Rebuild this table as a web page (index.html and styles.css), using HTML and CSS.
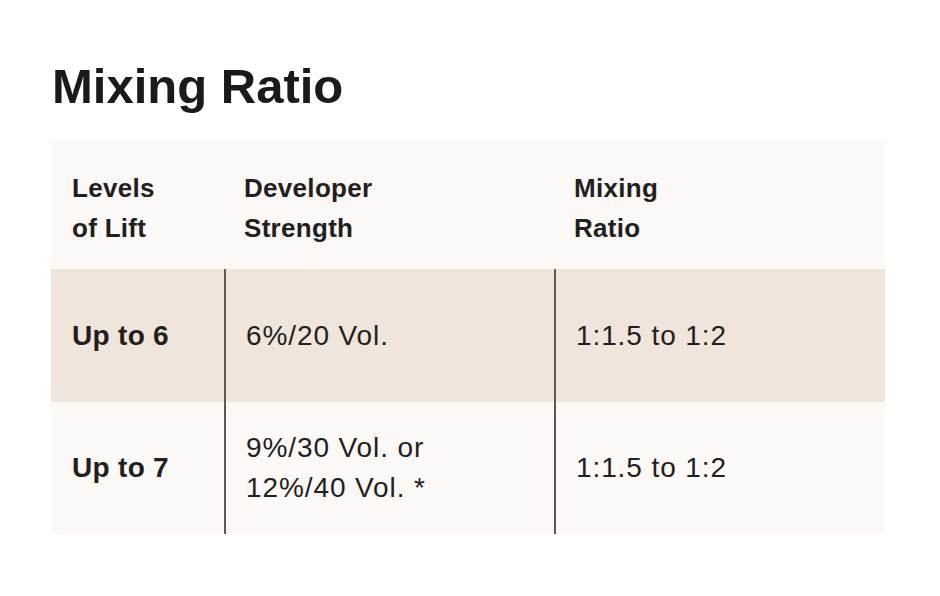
FILE: index.html
```html
<!DOCTYPE html>
<html lang="en">
<head>
<meta charset="utf-8">
<title>Mixing Ratio</title>
<link rel="stylesheet" href="styles.css">
</head>
<body>
<main class="page">
  <h1 class="title">Mixing Ratio</h1>
  <table class="ratio-table">
    <thead>
      <tr class="head-row">
        <th class="col-lift">Levels<br>of Lift</th>
        <th class="col-dev">Developer<br>Strength</th>
        <th class="col-mix">Mixing<br>Ratio</th>
      </tr>
    </thead>
    <tbody>
      <tr class="row row-tint">
        <td class="cell-lift">Up to 6</td>
        <td class="cell-line">6%/20 Vol.</td>
        <td class="cell-line">1:1.5 to 1:2</td>
      </tr>
      <tr class="row row-plain">
        <td class="cell-lift">Up to 7</td>
        <td class="cell-line">9%/30 Vol. or<br>12%/40 Vol. *</td>
        <td class="cell-line">1:1.5 to 1:2</td>
      </tr>
    </tbody>
  </table>
</main>
</body>
</html>
```

FILE: styles.css
```css
html, body {
  margin: 0;
  padding: 0;
  background: #ffffff;
}

.page {
  padding: 58px 0 0 51px;
  font-family: "Liberation Sans", Arial, sans-serif;
  color: #231f20;
}

.title {
  margin: 0 0 26px 1px;
  font-size: 49px;
  line-height: 56px;
  font-weight: 700;
  color: #1c1919;
}

.ratio-table {
  width: 834px;
  table-layout: fixed;
  border-collapse: separate;
  border-spacing: 0;
}

.ratio-table th,
.ratio-table td {
  box-sizing: border-box;
  text-align: left;
  padding: 0 0 0 20px;
}

.head-row th {
  background: #fbf8f5;
  font-size: 26px;
  line-height: 40px;
  font-weight: 700;
  letter-spacing: 0.3px;
  padding-top: 28px;
  padding-bottom: 21px;
  vertical-align: top;
}

.col-lift { width: 173px; padding-left: 21px !important; }
.col-dev { width: 330px; }
.col-mix { width: 331px; }

.row td {
  font-size: 28px;
  line-height: 40px;
  letter-spacing: 0.9px;
  vertical-align: middle;
}

.row-tint { height: 133px; }
.row-tint td { background: #f0e5da; }

.row-plain { height: 132px; }
.row-plain td { background: #fbf8f5; }

.row .cell-lift {
  font-weight: 700;
  letter-spacing: 0.3px;
  padding-left: 21px;
}

.row .cell-line {
  border-left: 2px solid #5e5956;
}
```
